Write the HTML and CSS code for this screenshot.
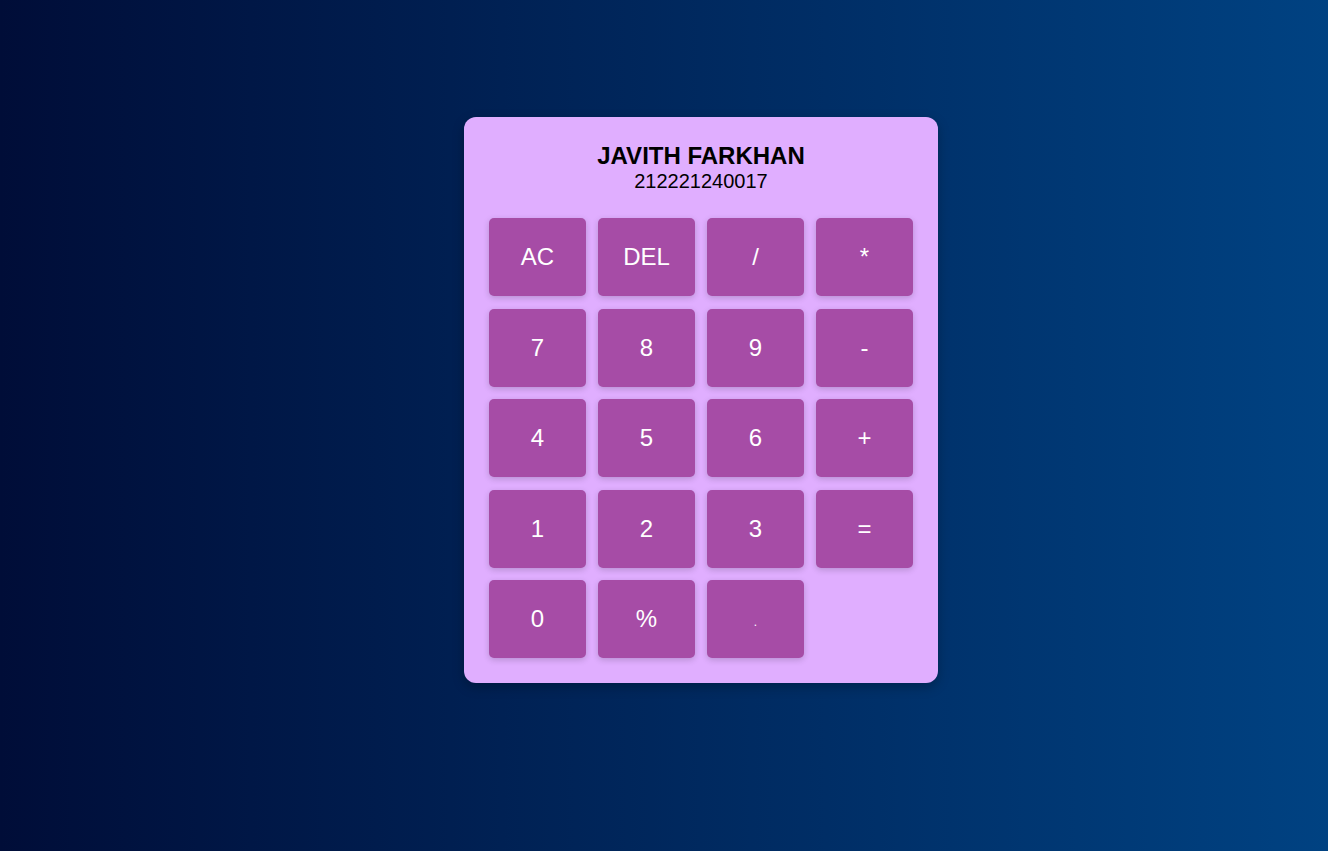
FILE: index.html
```html
<!DOCTYPE html>
<html>
<head>
<meta charset="utf-8">
<link rel="stylesheet" href="styles.css">
</head>
<body>
<div class="card">
  <div class="header">
    <div class="name">JAVITH FARKHAN</div>
    <div class="id">212221240017</div>
  </div>
  <div class="keys">
    <button class="key">AC</button>
    <button class="key">DEL</button>
    <button class="key">/</button>
    <button class="key">*</button>
    <button class="key">7</button>
    <button class="key">8</button>
    <button class="key">9</button>
    <button class="key">-</button>
    <button class="key">4</button>
    <button class="key">5</button>
    <button class="key">6</button>
    <button class="key">+</button>
    <button class="key">1</button>
    <button class="key">2</button>
    <button class="key">3</button>
    <button class="key">=</button>
    <button class="key">0</button>
    <button class="key">%</button>
    <button class="key dot">.</button>
  </div>
</div>
</body>
</html>
```
FILE: styles.css
```css
html, body {
  margin: 0;
  padding: 0;
  height: 100%;
}
body {
  background: linear-gradient(to right, #000d38, #004282);
  font-family: "Liberation Sans", Arial, sans-serif;
  display: flex;
  justify-content: center;
  align-items: flex-start;
}
.card {
  margin-top: 117px;
  margin-left: 74px;
  width: 424px;
  padding: 25px;
  background: #e0aeff;
  border-radius: 12px;
  box-shadow: 0 4px 12px rgba(0, 0, 0, 0.25);
}
.header {
  text-align: center;
  color: #000;
  height: 76px;
}
.name {
  font-size: 24px;
  font-weight: bold;
  line-height: 27px;
}
.id {
  font-size: 20px;
  line-height: 23px;
  margin-top: 1px;
}
.keys {
  display: grid;
  grid-template-columns: repeat(4, 97px);
  grid-auto-rows: 78px;
  column-gap: 12px;
  row-gap: 12.5px;
}
.key {
  border: none;
  border-radius: 5px;
  background: #a64ca6;
  color: #fff;
  font-family: "Liberation Sans", Arial, sans-serif;
  font-size: 24px;
  box-shadow: 0 2px 6px rgba(0, 0, 0, 0.18);
  padding: 0;
}
.dot {
  font-size: 12px;
  padding-top: 6px;
}
```
